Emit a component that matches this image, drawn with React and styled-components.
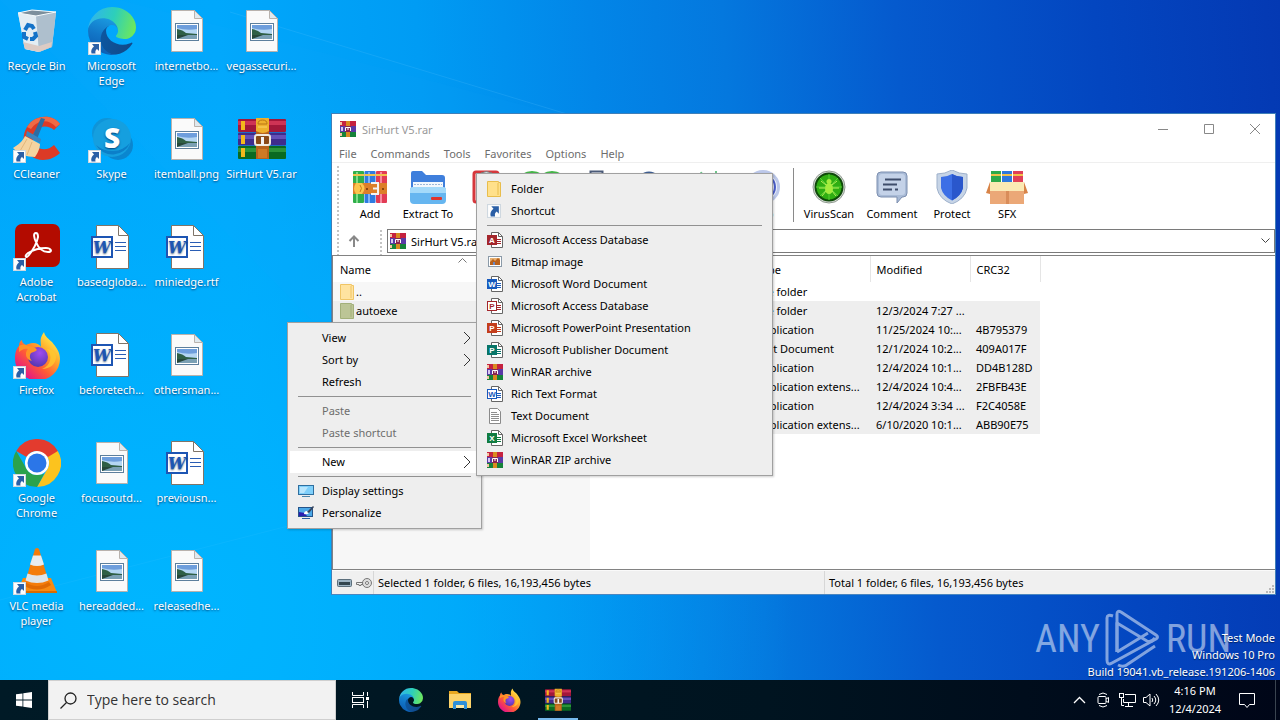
import React from "react";
import styled, { createGlobalStyle, css } from "styled-components";

const GlobalStyle = createGlobalStyle`
  * {
    box-sizing: border-box;
  }

  body {
    margin: 0;
    overflow: hidden;
    font-family: "Noto Sans", "Open Sans", sans-serif;
    font-size: 11px;
    line-height: 15px;
    color: #000;
  }

  button,
  input,
  select {
    font: inherit;
    color: inherit;
    border: none;
    background: none;
    padding: 0;
    margin: 0;
    border-radius: 0;
  }

  svg {
    display: block;
    flex-shrink: 0;
  }
`;

const Screen = styled.div`
  display: flex;
  flex-direction: column;
  height: 100vh;
  background: linear-gradient(
    86deg,
    #00a4fa 0%,
    #00a8fc 20%,
    #009cf4 35%,
    #0286e8 48%,
    #0478de 58%,
    #055ace 71%,
    #0346c0 86%,
    #0439b3 100%
  );
`;

const Desktop = styled.main`
  position: relative;
  flex: 1;
  min-height: 0;
  overflow: hidden;
  background: radial-gradient(
    ellipse 640px 560px at 12% 90%,
    rgba(0, 182, 255, 0.95),
    rgba(0, 180, 255, 0.55) 50%,
    rgba(0, 176, 255, 0) 100%
  );
`;

const Rays = styled.svg`
  position: absolute;
  inset: 0;
  width: 100%;
  height: 100%;
`;

/* desktop icons */

const IconGrid = styled.div`
  position: relative;
  display: grid;
  grid-auto-flow: column;
  grid-template-rows: repeat(6, 108px);
  grid-auto-columns: 75px;
  width: max-content;
  margin-left: -1px;
`;

const Shortcut = styled.button`
  display: flex;
  flex-direction: column;
  align-items: center;
  gap: 3px;
  padding-top: 7px;
  color: #fff;
  text-shadow: 0 1px 2px rgba(0, 40, 90, 0.8);
  grid-column: ${({ $col }) => $col};
`;

const IconBox = styled.span`
  position: relative;
  display: block;
  width: 48px;
  height: 48px;
`;

const LinkArrow = styled.span`
  position: absolute;
  left: 0;
  bottom: 0;
`;

const IconLabel = styled.span`
  white-space: pre;
`;

/* archive window */

const Window = styled.section`
  position: absolute;
  top: 113px;
  left: 331px;
  right: 4px;
  bottom: 85px;
  display: flex;
  flex-direction: column;
  background: #fff;
  border: 1px solid #3f7fb8;
  border-bottom-color: #4a86c0;
`;

const TitleBar = styled.header`
  display: flex;
  align-items: center;
  height: 30px;
  padding-left: 8px;
  gap: 6px;
  color: #999;
`;

const Title = styled.h1`
  flex: 1;
  margin: 0;
  font-size: 11px;
  font-weight: 400;
`;

const WindowButton = styled.button`
  display: flex;
  justify-content: center;
  align-items: center;
  width: 40px;
  height: 30px;
  color: #888;
`;

const MenuBar = styled.nav`
  display: flex;
  align-items: center;
  gap: 14px;
  height: 19px;
  padding-left: 7px;
  border-bottom: 1px solid #efefef;
  color: #6d6d6d;
`;

const Gripper = styled.span`
  align-self: stretch;
  width: 2px;
  margin: 3px 0 0;
  background: repeating-linear-gradient(#c4c4c4 0 2px, #fff 2px 4px);
`;

const Toolbar = styled.div`
  display: flex;
  height: 64px;
  padding-left: 5px;
`;

const ToolButton = styled.button`
  display: flex;
  flex-direction: column;
  align-items: center;
  gap: 2px;
  width: ${({ $width }) => $width}px;
  padding-top: 7px;
  white-space: nowrap;
`;

const ToolGap = styled.span`
  width: ${({ $width }) => $width}px;
`;

const ToolSeparator = styled.span`
  width: 1px;
  margin: 5px 4px 5px 14px;
  background: #8a8a8a;
`;

const AddressRow = styled.div`
  display: flex;
  align-items: center;
  height: 28px;
  padding-left: 5px;
`;

const UpButton = styled.button`
  display: flex;
  justify-content: center;
  width: 30px;
  margin-right: 11px;
`;

const AddressBox = styled.label`
  display: flex;
  flex: 1;
  align-items: center;
  gap: 5px;
  height: 24px;
  margin-left: 5px;
  padding: 0 4px 0 2px;
  border: 1px solid #7a7a7a;
`;

const AddressSelect = styled.select`
  flex: 1;
  appearance: none;
  outline: none;
`;

const ListPane = styled.div`
  flex: 1;
  min-height: 0;
  overflow: hidden;
  border: 1px solid #828282;
  border-width: 1px 0 1px 1px;
  background: linear-gradient(90deg, #f7f7f7 257px, #fff 257px);
`;

const FileTable = styled.table`
  table-layout: fixed;
  width: 707px;
  border-collapse: collapse;

  th,
  td {
    padding: 0 0 0 6px;
    font-weight: 400;
    text-align: left;
    white-space: nowrap;
    overflow: hidden;
  }

  th:first-child,
  td:first-child {
    padding-left: 7px;
  }

  th {
    height: 26px;
    background: #fff;
    border-right: 1px solid #e5e5e5;
  }

  td {
    height: 19px;
  }
`;

const FileRow = styled.tr`
  ${({ $selected }) =>
    $selected &&
    css`
      background: #eeeeee;
    `}
`;

const FileName = styled.span`
  display: flex;
  align-items: center;
  gap: 2px;
`;

const SortMark = styled.svg`
  float: right;
  margin: -4px 123px 0 0;
`;

const StatusBar = styled.footer`
  display: flex;
  align-items: stretch;
  height: 24px;
  background: #f0f0f0;
  border-top: 1px solid #fafafa;
`;

const StatusIcons = styled.div`
  display: flex;
  align-items: center;
  gap: 4px;
  width: 42px;
  padding-left: 5px;
  border-right: 1px solid #d7d7d7;
`;

const StatusPart = styled.div`
  display: flex;
  align-items: center;
  flex: 1;
  padding-left: 4px;

  & + & {
    border-left: 1px solid #d7d7d7;
  }
`;

const SizeGrip = styled.svg`
  align-self: flex-end;
  margin-left: -10px;
`;

/* context menus */

const Menu = styled.ul`
  position: absolute;
  left: ${({ $x }) => $x}px;
  top: ${({ $y }) => $y}px;
  width: ${({ $width }) => $width}px;
  margin: 0;
  padding: 4px 2px;
  list-style: none;
  background: #eeeeee;
  border: 1px solid #a0a0a0;
  box-shadow: 1px 1px 2px rgba(0, 0, 0, 0.2);
`;

const MenuItem = styled.button`
  display: flex;
  align-items: center;
  gap: 8px;
  width: 100%;
  height: 22px;
  padding: 0 8px;
  text-align: left;
  background: ${({ $open }) => ($open ? "#fff" : "transparent")};

  &:disabled {
    color: #6d6d6d;
  }
`;

const MenuIcon = styled.span`
  width: 16px;
`;

const MenuText = styled.span`
  flex: 1;
  padding-bottom: 2px;
`;

const MenuLine = styled.li`
  height: 1px;
  margin: 3px 8px;
  background: #919191;
`;

/* watermark */

const Watermark = styled.div`
  position: absolute;
  right: 49px;
  bottom: 10px;
  display: flex;
  align-items: center;
  gap: 4px;
  height: 62px;
  color: #fff;
  opacity: 0.5;
  font-family: "Liberation Sans Narrow", "Roboto Condensed", "Liberation Sans", sans-serif;
  font-size: 38px;
  line-height: 60px;
`;

const BuildInfo = styled.div`
  position: absolute;
  right: 5px;
  bottom: 0;
  color: #fff;
  line-height: 17px;
  text-align: right;
  text-shadow: 0 1px 1px rgba(0, 0, 0, 0.5);
`;

/* taskbar */

const Taskbar = styled.footer`
  display: flex;
  align-items: stretch;
  height: 40px;
  background: linear-gradient(90deg, #001a26, #001420 60%, #000618);
  color: #fff;
`;

const StartButton = styled.button`
  display: flex;
  justify-content: center;
  align-items: center;
  width: 48px;
`;

const SearchBox = styled.label`
  display: flex;
  align-items: center;
  gap: 10px;
  width: 288px;
  padding-left: 11px;
  background: #f2f2f2;
  border: 1px solid #cfcfcf;
  color: #222;
`;

const SearchInput = styled.input`
  flex: 1;
  min-width: 0;
  font-family: "Open Sans", "Noto Sans", sans-serif;
  font-size: 14px;
  line-height: 20px;
  outline: none;

  &::placeholder {
    color: #333;
    opacity: 1;
  }
`;

const TaskButton = styled.button`
  display: flex;
  justify-content: center;
  align-items: center;
  width: 49px;

  ${SearchBox} + & {
    margin-right: 1px;
  }
`;

const ActiveTask = styled(TaskButton)`
  width: 40px;
  margin-left: 5px;
  padding-top: 2px;
  border-bottom: 2px solid #76b9ed;
`;

const Tray = styled.div`
  display: flex;
  align-items: center;
  margin-left: auto;
`;

const TrayButton = styled.button`
  display: flex;
  justify-content: center;
  width: 24px;
`;

const Clock = styled.time`
  width: 64px;
  line-height: 18px;
  text-align: center;
`;

const ActionCenter = styled(TrayButton)`
  width: 40px;
`;

const PeekEdge = styled.span`
  align-self: stretch;
  width: 5px;
  margin-left: 8px;
  border-left: 1px solid #3a4450;
`;

/* drawings */

const ArrowBadge = ({ size = 13 }) => (
  <svg width={size} height={size} viewBox="0 0 13 13">
    <rect x="0.5" y="0.5" width="12" height="12" fill="#fdfdfd" stroke="#cfd8e0" />
    <path d="M4 2h7v7L9 7C7.500 8 7 9.500 7.500 11.500L3.500 11.500C2.500 8.500 4 6 6 4.500z" fill="#2b5fa6" />
  </svg>
);

const RecycleBin = () => (
  <svg width="48" height="48" viewBox="0 0 48 48">
    <path d="M5 6l14-3 24 2-4 35-13 5-14-3z" fill="#d5e3ee" opacity="0.92" />
    <path d="M5 6l18 3 3 36-14-3z" fill="#e3edf3" />
    <path d="M23 9l20-4-4 35-13 5z" fill="#aebfcd" />
    <path d="M10 35l16 4 13-4-1 5-12 5-14-3z" fill="#dccbc4" />
    <path d="M5 6l14-3 24 2-20 4z" fill="#7c8f9c" stroke="#f5fafc" />
    <g fill="none" stroke="#1473c8" strokeWidth="4">
      <path d="M12 23l3-5 4 1 2 3" />
      <path d="M22 25l1 4-3 3h-3" />
      <path d="M15 32l-4-2v-5" />
    </g>
  </svg>
);

const EdgeLogo = ({ size = 48 }) => (
  <svg width={size} height={size} viewBox="0 0 256 256">
    <defs>
      <linearGradient id="edgeDark" x1="0" x2="1" y1="0" y2="0.300">
        <stop offset="0" stopColor="#0c59a4" />
        <stop offset="1" stopColor="#114a8b" />
      </linearGradient>
      <linearGradient id="edgeBlue" x1="0.600" x2="0.300" y1="0" y2="1">
        <stop offset="0" stopColor="#1b9de2" />
        <stop offset="0.500" stopColor="#1277c8" />
        <stop offset="1" stopColor="#0b5ab0" />
      </linearGradient>
      <linearGradient id="edgeGreen" x1="0" x2="1" y1="0.400" y2="0.600">
        <stop offset="0" stopColor="#30b4ee" />
        <stop offset="0.500" stopColor="#2dcfba" />
        <stop offset="1" stopColor="#6fe85a" />
      </linearGradient>
    </defs>
    <path fill="url(#edgeDark)" d="M231 190.500c-3.400 1.800-6.900 3.400-10.500 4.700a101 101 0 0 1-35.900 6.400c-47.300 0-88.500-32.500-88.500-74.300a31.500 31.500 0 0 1 16.400-27.300c-42.800 1.800-53.800 46.400-53.800 72.500 0 74 68.100 81.400 82.800 81.400 7.900 0 19.800-2.300 27-4.600l1.300-.4a128.300 128.300 0 0 0 66.600-52.800 4 4 0 0 0-5.400-5.600Z" />
    <path fill="url(#edgeBlue)" d="M105.700 241.400a79.200 79.200 0 0 1-22.700-21.300 80.700 80.700 0 0 1 29.500-120c3.200-1.500 8.500-4.100 15.600-4a32.400 32.400 0 0 1 25.700 13 31.900 31.900 0 0 1 6.300 18.700c0-.2 24.500-79.600-80-79.600-43.900 0-80 41.600-80 78.200a130.200 130.200 0 0 0 12.100 56 128 128 0 0 0 156.400 67 75.500 75.500 0 0 1-62.800-8Z" />
    <path fill="url(#edgeGreen)" d="M152.300 148.900c-.9 1-3.400 2.500-3.400 5.600 0 2.600 1.700 5.200 4.800 7.300 14.300 10 41.400 8.600 41.500 8.600 10.700 0 21.100-2.900 30.300-8.300a61.400 61.400 0 0 0 30.400-52.900c.3-22.400-8-37.300-11.300-43.900C223.500 23.900 177.700 0 128 0A128 128 0 0 0 0 126.200c.5-36.500 36.800-66 80-66 3.500 0 23.500.3 42 10.100 16.300 8.600 24.900 19 30.800 29.200 6.200 10.700 7.300 24.100 7.300 29.500 0 5.300-2.700 13.300-7.800 19.900Z" />
  </svg>
);

const ImageFile = () => (
  <svg width="48" height="48" viewBox="0 0 48 48">
    <path d="M8.500 3.500h23l8 8v33h-31z" fill="#fafafa" stroke="#b9b2ad" />
    <path d="M31.500 3.500v8h8z" fill="#dfe9ef" stroke="#b9b2ad" />
    <rect x="12.500" y="16.500" width="23" height="17" fill="#fff" stroke="#5d7f9d" />
    <rect x="14" y="18" width="20" height="14" fill="#b4d6f3" />
    <path d="M14 18h20v4q-10 2-20-1z" fill="#6e9edc" />
    <path d="M14 22q6 1 9 4l11 1v2H14z" fill="#2f5f45" />
    <path d="M14 28h20v4H14z" fill="#7ba0b4" />
    <path d="M14 28h11l-11 4z" fill="#27483a" />
  </svg>
);

const WordFile = () => (
  <svg width="48" height="48" viewBox="0 0 48 48">
    <path d="M8.500 2.500h22l10 10v33h-32z" fill="#fff" stroke="#7f7468" />
    <path d="M30.500 2.500v10h10" fill="none" stroke="#7f7468" />
    <path d="M27 19.500h11M27 23.500h11M27 27.500h11" stroke="#2a5db4" />
    <rect x="4" y="14" width="20" height="20" fill="#fff" stroke="#1d55b3" strokeWidth="2" />
    <text x="14" y="30" textAnchor="middle" fontFamily="DejaVu Serif, serif" fontStyle="italic" fontWeight="700" fontSize="16" fill="#1d55b3">W</text>
  </svg>
);

const CCleaner = () => (
  <svg width="48" height="48" viewBox="0 0 48 48">
    <path d="M47 9C39-2 21 0 14 12c-6 10-4 22 4 29 9 7 22 4 29-3l-6-8c-5 5-13 6-18 1-5-6-4-12 1-17 5-4 13-3 17 1z" fill="#dc3a26" />
    <path d="M47 9C39-2 21 0 14 12l4 2C25 4 36 4 43 12z" fill="#ef6a45" />
    <path d="M28 3l4 1-8 20-5-2z" fill="#2c6da3" />
    <path d="M14 16l14 8-1 4-14-7z" fill="#3c85bd" />
    <path d="M12 21l15 8c0 5-3 10-5 13-8 0-17-3-22-9 5-3 10-7 12-12z" fill="#f4d3a0" />
    <path d="M14 24l-7 12M19 27l-5 13" stroke="#e3b67a" />
  </svg>
);

const Skype = () => (
  <svg width="48" height="48" viewBox="0 0 48 48">
    <circle cx="19" cy="18" r="15" fill="#0f94d8" />
    <circle cx="30" cy="30" r="15" fill="#0a86cf" />
    <circle cx="24" cy="23" r="19" fill="#159fdf" />
    <path d="M8 30a19 19 0 0 0 34-2 24 24 0 0 1-34 2z" fill="#0b7fc9" />
    <text x="24" y="33" textAnchor="middle" fontFamily="Open Sans, sans-serif" fontWeight="800" fontSize="28" fill="#fff">S</text>
  </svg>
);

const Acrobat = () => (
  <svg width="48" height="48" viewBox="0 0 48 48">
    <rect x="2" y="1" width="45" height="43" rx="7" fill="#b30b00" />
    <path d="M23 10c-3 0-2 5 0 9 2 5 6 10 12 10 5 0 3-4-2-4-6 0-13 2-18 5-4 3-2 6 1 2 4-5 8-13 9-18 0-3-1-4-2-4z" fill="none" stroke="#fff" strokeWidth="2" />
  </svg>
);

const Firefox = ({ size = 48 }) => (
  <svg width={size} height={size} viewBox="0 0 48 48">
    <defs>
      <linearGradient id="foxBody" x1="0.900" x2="0.200" y1="0.100" y2="0.900">
        <stop offset="0" stopColor="#fff44f" />
        <stop offset="0.350" stopColor="#ffa72a" />
        <stop offset="0.650" stopColor="#ff5a36" />
        <stop offset="1" stopColor="#e31587" />
      </linearGradient>
      <radialGradient id="foxCore" cx="0.600" cy="0.300" r="0.800">
        <stop offset="0" stopColor="#a14bf0" />
        <stop offset="1" stopColor="#4b35a8" />
      </radialGradient>
    </defs>
    <path d="M31 1c1 5 5 7 8 10 4 5 8 10 8 17a22 21 0 0 1-45 0c0-8 2-11 4-13 0-3 1-5 3-6 0 3 2 4 4 5 2-1 4-2 7-2 4 0 7 2 8 4 0-5-2-8 3-15z" fill="url(#foxBody)" />
    <circle cx="25" cy="26" r="10" fill="url(#foxCore)" />
    <path d="M6 15c4-2 7-1 9 0 4 0 7 1 9 4-2 2-5 2-6 3-2 3-1 6 1 8-6-1-8-8-4-12-4-1-6 1-9 3z" fill="#ff9426" />
    <path d="M34 18c6 6 4 17-5 20 8 0 14-5 14-12 0-5-4-8-9-8z" fill="#ffc830" opacity="0.800" />
  </svg>
);

const Chrome = () => (
  <svg width="48" height="48" viewBox="0 0 48 48">
    <path d="M3.200 12A24 24 0 0 1 44.800 12L24 12a12 12 0 0 0-10.400 6z" fill="#e33b2e" />
    <path d="M44.800 12A24 24 0 0 1 24 48L34.400 30A12 12 0 0 0 34.400 18L33 12z" fill="#fcc31e" />
    <path d="M24 48A24 24 0 0 1 3.200 12L13.600 30A12 12 0 0 0 24 36l7-1z" fill="#2ba24c" />
    <path d="M44.800 12H24v2l11 4z" fill="#e33b2e" />
    <circle cx="24" cy="24" r="12" fill="#fff" />
    <circle cx="24" cy="24" r="9.500" fill="#2b76e8" />
  </svg>
);

const Vlc = () => (
  <svg width="48" height="48" viewBox="0 0 48 48">
    <path d="M10 31h28l6 14.500H4z" fill="#f88a12" />
    <path d="M4 44h40v2H4z" fill="#d96b00" />
    <path d="M22 2q2-2 4 0l10 34q-12 7-24 0z" fill="#f47c0b" />
    <path d="M20 8.500h8l3 9q-7 3-14 0z" fill="#e8ecef" />
    <path d="M14.500 26.500q9.500 4 19 0l2 7q-11.500 5-23 0z" fill="#dfe4e8" />
    <path d="M12 35q12 8 24 0l2 3q-14 9-28 0z" fill="#e06a04" />
  </svg>
);

const Books = ({ size = 48 }) => (
  <svg width={size} height={size} viewBox="0 0 48 48">
    <rect x="0" y="4" width="48" height="13" rx="1" fill="#a3173a" />
    <rect x="0" y="6" width="48" height="4" fill="#cf3355" />
    <rect x="0" y="17.500" width="48" height="13" rx="1" fill="#3f2c8c" />
    <rect x="0" y="20" width="48" height="4" fill="#6450b8" />
    <rect x="0" y="31" width="48" height="13" rx="1" fill="#0a6a22" />
    <rect x="0" y="33" width="48" height="4" fill="#2b933a" />
    <path d="M3 6h4v9H3zM3 20h4v9H3zM3 33h4v9H3z" fill="#f4b81c" />
    <path d="M18 4h13v40H18z" fill="#b8631c" />
    <path d="M18 3h13v13q-6 4-13 0z" fill="#eeb02c" />
    <path d="M20 9q0-4 4.500-4t4.500 4z" fill="none" stroke="#b87514" />
    <path d="M20 12h9" stroke="#f9d566" />
    <rect x="17" y="20" width="15" height="10" rx="2" fill="#8a4a18" stroke="#f0eadd" strokeWidth="2" />
    <path d="M23 22h3v8h-3z" fill="#f3f3f3" />
    <path d="M20 34h9v9h-9z" fill="#cf7a25" />
  </svg>
);

const BooksSmall = () => (
  <svg width="16" height="16" viewBox="0 0 16 16">
    <path d="M0 0h16v5H0z" fill="#c5213f" />
    <path d="M0 5h16v6H0z" fill="#5a3aa6" />
    <path d="M0 11h16v5H0z" fill="#16833a" />
    <path d="M0 1h2v3H0zM0 12h2v3H0z" fill="#f5c5a0" />
    <path d="M1 6h2v4H1z" fill="#d8c8f0" />
    <path d="M6 0h4v5H6zM6 11h4v5H6z" fill="#d98a20" />
    <path d="M5 5h6v6H5z" fill="#8a2450" />
    <path d="M5.500 10V6.500h5V10M8 6.500V9" fill="none" stroke="#fff" />
  </svg>
);

const FolderSmall = ({ color = "#ffe08a", edge = "#e8bd4c" }) => (
  <svg width="14" height="16" viewBox="0 0 14 16">
    <path d="M0.500 0.500h11v1h2v14h-13z" fill={color} stroke={edge} />
    <path d="M11 2v12" stroke={edge} />
  </svg>
);

const OfficeSmall = ({ color, letter, hollow }) => (
  <svg width="16" height="16" viewBox="0 0 16 16">
    <path d="M4.500 0.500h7l4 4v11h-11z" fill="#fff" stroke="#666" />
    <path d="M11.500 0.500v4h4" fill="none" stroke="#666" />
    <path d="M10 7.500h4M10 9.500h4M10 11.500h4" stroke={color} />
    <rect x="0.500" y="3.500" width="9" height="9" fill={hollow ? "#fff" : color} stroke={color} />
    <text x="5" y="11" textAnchor="middle" fontFamily="Liberation Sans, sans-serif" fontWeight="700" fontSize="8" fill={hollow ? color : "#fff"}>
      {letter}
    </text>
  </svg>
);

const BitmapSmall = () => (
  <svg width="16" height="16" viewBox="0 0 16 16">
    <rect x="1.500" y="2.500" width="13" height="10" fill="#fff" stroke="#8b9aa8" />
    <path d="M3 4h10v7H3z" fill="#e8b070" />
    <path d="M3 8l3-3 2 2 3-3 2 2v5H3z" fill="#b8601c" />
    <path d="M6 8h2v3H6z" fill="#6b86c0" />
  </svg>
);

const TextSmall = () => (
  <svg width="16" height="16" viewBox="0 0 16 16">
    <path d="M2.500 0.500h8l3 3v12h-11z" fill="#fff" stroke="#8a8a8a" />
    <path d="M4 4.500h6M4 6.500h8M4 8.500h8M4 10.500h8M4 12.500h8" stroke="#8f8f8f" />
  </svg>
);

const DisplaySmall = () => (
  <svg width="16" height="16" viewBox="0 0 16 16">
    <rect x="0.500" y="2.500" width="15" height="9" fill="#7fd0fb" stroke="#2f6f9f" />
    <path d="M2 4h8L6 10H2z" fill="#b9e6fd" />
    <path d="M4 13.500h8" stroke="#4c87ad" />
  </svg>
);

const PersonalizeSmall = () => (
  <svg width="16" height="16" viewBox="0 0 16 16">
    <rect x="0.500" y="2.500" width="14" height="9" fill="#4aa8e8" stroke="#24548a" />
    <path d="M1 7l6 1 2 3H1z" fill="#2a1fb0" />
    <path d="M6 9q0-3 3-3l2 2q-2 2-5 1z" fill="#fff" />
    <path d="M9 7l6-6 1 1-5 6z" fill="#35435c" />
    <path d="M4 13.500h8" stroke="#2a5ea0" />
  </svg>
);

const Chevron = () => (
  <svg width="8" height="14" viewBox="0 0 8 14" fill="none" stroke="#333">
    <path d="M1 1l6 6-6 6" />
  </svg>
);

const AddIcon = () => (
  <svg width="34" height="34" viewBox="0 0 34 34">
    <rect x="0" y="1" width="11" height="32" rx="1" fill="#2fae4a" />
    <rect x="11.500" y="1" width="11" height="32" rx="1" fill="#2f7be0" />
    <rect x="23" y="1" width="11" height="32" rx="1" fill="#e23b55" />
    <path d="M3 2h2v31H3z" fill="#7fdc8a" />
    <path d="M15 2h2v31h-2z" fill="#7db4f7" />
    <path d="M27 2h2v31h-2z" fill="#f78ba0" />
    <path d="M0 4h11v2H0zM11.500 4h11v2h-11zM23 4h11v2H23z" fill="#f2c14a" />
    <path d="M0 13h34v11H0z" fill="#dc7f2a" />
    <path d="M3 13h6q5 5 0 11H3q-4-5 0-11z" fill="#fbc54c" />
    <path d="M7 15q3 3 0 7" fill="none" stroke="#c97c1a" />
    <path d="M18 13h7v11h-7M20 18.500h5" fill="none" stroke="#f4f4f4" strokeWidth="2" />
    <path d="M13 18h2v2h-2zM29 18h2v2h-2z" fill="#8a4510" />
  </svg>
);

const ExtractIcon = () => (
  <svg width="36" height="34" viewBox="0 0 36 34">
    <path d="M1 3q0-2 2-2h9l4 4h16q3 0 3 3v12H1z" fill="#3f7fdc" />
    <path d="M3 12h30v8H3z" fill="#f3f8fd" />
    <path d="M4 14.500h28" stroke="#9db8d8" strokeDasharray="2 1" />
    <path d="M0 20q0-3 3-3h30q3 0 3 3v10q0 4-4 4H4q-4 0-4-4z" fill="#66b6f0" />
    <path d="M0 20q0-3 3-3h30q3 0 3 3v3H0z" fill="#a4dafa" />
    <rect x="21" y="27" width="11" height="3" rx="1" fill="#e0352c" />
  </svg>
);

const TestIcon = () => (
  <svg width="34" height="34" viewBox="0 0 34 34">
    <rect x="4" y="2" width="24" height="30" rx="2" fill="#fff" stroke="#d6373c" strokeWidth="3" />
    <path d="M11 3q5-3 11 0v3H11z" fill="#d9dde2" stroke="#777" />
  </svg>
);

const ViewIcon = () => (
  <svg width="40" height="34" viewBox="0 0 40 34">
    <path d="M0 4q10-6 20 0 10-6 20 0v26H0z" fill="#45b649" />
    <path d="M3 6q9-4 17 0 8-4 17 0v20H3z" fill="#eaf7e8" />
  </svg>
);

const DeleteIcon = () => (
  <svg width="34" height="34" viewBox="0 0 34 34">
    <path d="M10.500 4V1.500h12V4" fill="none" stroke="#4a5a78" strokeWidth="2" />
    <path d="M5 5h24l-3 28H8z" fill="#a9b8d0" />
  </svg>
);

const FindIcon = () => (
  <svg width="34" height="34" viewBox="0 0 34 34">
    <circle cx="17" cy="14" r="11" fill="#d6e8fb" stroke="#3f5f92" strokeWidth="3" />
  </svg>
);

const WizardIcon = () => (
  <svg width="34" height="34" viewBox="0 0 34 34">
    <path d="M9 2l2 5M24 1v6M4 30L22 12" stroke="#6ec48a" strokeWidth="2" />
  </svg>
);

const InfoIcon = () => (
  <svg width="34" height="34" viewBox="0 0 34 34">
    <circle cx="17" cy="17" r="15.500" fill="#eef2fc" stroke="#bcc8ea" strokeWidth="3" />
    <circle cx="17" cy="17" r="12" fill="#e4eafa" stroke="#4c5fcc" strokeWidth="2" />
  </svg>
);

const VirusIcon = () => (
  <svg width="34" height="34" viewBox="0 0 34 34">
    <circle cx="17" cy="17" r="16" fill="#d9ddd9" stroke="#8f9a8f" />
    <circle cx="17" cy="17" r="13.500" fill="#2fae12" stroke="#0f4a0a" strokeWidth="2" />
    <path d="M17 4v26M4 17h26M8 8l18 18M26 8L8 26" stroke="#57cf35" />
    <g stroke="#b9f25a" fill="none">
      <path d="M14 15l-5-4M20 15l5-4M13 18H7M21 18h6M14 21l-4 5M20 21l4 5" />
    </g>
    <ellipse cx="17" cy="18.500" rx="4" ry="5.500" fill="#a4ec3e" />
    <circle cx="17" cy="11.500" r="2.500" fill="#a4ec3e" />
  </svg>
);

const CommentIcon = () => (
  <svg width="34" height="34" viewBox="0 0 34 34">
    <path d="M6 2h22q4 0 4 4v17q0 4-4 4h-1l-5 6v-6H6q-4 0-4-4V6q0-4 4-4z" fill="#a9bbd6" stroke="#7d8fb0" />
    <path d="M7 4h20q3 0 3 3v15q0 3-3 3H7q-3 0-3-3V7q0-3 3-3z" fill="#c4d2e8" />
    <path d="M10 9.500h16M8 14.500h14M8 19.500h9M20 19.500h3" stroke="#3e4d6b" strokeWidth="2" />
  </svg>
);

const ProtectIcon = () => (
  <svg width="34" height="34" viewBox="0 0 34 34">
    <path d="M17 0q7 4 15 4v14q-2 11-15 16Q4 29 2 18V4q8 0 15-4z" fill="#c6d4e6" stroke="#9db0cb" />
    <path d="M17 4q5 3 11 3v11q-2 8-11 12.500Q8 26 6 18V7q6 0 11-3z" fill="#3c6fe6" />
    <path d="M17 4q5 3 11 3v11q-2 8-11 12.500z" fill="#2a57cc" />
  </svg>
);

const SfxIcon = () => (
  <svg width="42" height="34" viewBox="0 0 42 34">
    <path d="M5 1h10v14H5z" fill="#2fa94a" />
    <path d="M16 1h10v14H16z" fill="#2f78dd" />
    <path d="M27 1h10v14H27z" fill="#e04058" />
    <path d="M5 4h10v2H5zM16 4h10v2H16zM27 4h10v2H27z" fill="#f2c14a" />
    <path d="M4 20h34v14H4z" fill="#eba877" />
    <path d="M4 12h34l1 9H3z" fill="#fbe9b4" />
    <path d="M4 12L0 23l4 1zM38 12l4 11-4 1z" fill="#d88448" />
    <path d="M20 21h3v13h-3z" fill="#d98d5a" />
  </svg>
);

const DiskIcon = () => (
  <svg width="15" height="8" viewBox="0 0 15 8">
    <rect x="0.500" y="0.500" width="14" height="7" rx="1" fill="#9db4c4" stroke="#5c6f7c" />
    <path d="M2 3h11v3H2z" fill="#33464f" />
  </svg>
);

const KeyIcon = () => (
  <svg width="16" height="12" viewBox="0 0 16 12" fill="none" stroke="#777">
    <circle cx="11" cy="6" r="4.500" fill="#ddd" />
    <circle cx="11" cy="6" r="1.500" fill="#fff" />
    <path d="M7 5.500H0.500v2H3v1h2v-1h2" />
  </svg>
);

const WindowsLogo = () => (
  <svg width="16" height="16" viewBox="0 0 16 16" fill="#fff">
    <path d="M0 2.300l6.500-.9v6.200H0zM7.300 1.300L16 0v7.600H7.300zM0 8.400h6.500v6.200L0 13.700zM7.300 8.400H16V16l-8.700-1.300z" />
  </svg>
);

const SearchGlyph = () => (
  <svg width="17" height="17" viewBox="0 0 17 17" fill="none" stroke="#222">
    <circle cx="10.500" cy="6.500" r="5.500" strokeWidth="1.300" />
    <path d="M6.500 10.500L0.500 16.500" strokeWidth="1.300" />
  </svg>
);

const TaskViewGlyph = () => (
  <svg width="17" height="16" viewBox="0 0 17 16" fill="none" stroke="#fff">
    <path d="M0.500 0v3.500h11V0M0.500 16v-3.500h11V16M15.500 0v4M15.500 9v7" />
    <rect x="0.500" y="5.500" width="11" height="5" />
    <rect x="14.500" y="5.500" width="2" height="2" fill="#fff" />
  </svg>
);

const Explorer = () => (
  <svg width="22" height="20" viewBox="0 0 22 20">
    <path d="M0 1h8l2 2h12v15H0z" fill="#e9a820" />
    <path d="M0 4h22v14H0z" fill="#fdd36a" />
    <path d="M4 19v-6q0-2 2-2h10q2 0 2 2v6h-3v-4H7v4z" fill="#2f8fd8" />
    <path d="M7 15h8v3H7z" fill="#fbe7a6" />
  </svg>
);

const PlayMark = () => (
  <svg width="58" height="60" viewBox="0 0 58 60" fill="none" stroke="#fff" strokeWidth="3" strokeLinejoin="round">
    <path d="M9 7q-6-2-6 2v42q0 6 5 3L52 30q3-2 0-4L17 3q-4-2-4 2v38" />
    <path d="M13 43V14l30 18q4 2 8-3M13 43l31-19M14 56q6 3 10-1l27-18" />
  </svg>
);

const desktopIcons = [
  { col: 1, label: "Recycle Bin", icon: <RecycleBin /> },
  { col: 1, label: "CCleaner", icon: <CCleaner />, link: true },
  { col: 1, label: "Adobe\nAcrobat", icon: <Acrobat />, link: true },
  { col: 1, label: "Firefox", icon: <Firefox />, link: true },
  { col: 1, label: "Google\nChrome", icon: <Chrome />, link: true },
  { col: 1, label: "VLC media\nplayer", icon: <Vlc />, link: true },
  { col: 2, label: "Microsoft\nEdge", icon: <EdgeLogo />, link: true },
  { col: 2, label: "Skype", icon: <Skype />, link: true },
  { col: 2, label: "basedgloba...", icon: <WordFile /> },
  { col: 2, label: "beforetech...", icon: <WordFile /> },
  { col: 2, label: "focusoutd...", icon: <ImageFile /> },
  { col: 2, label: "hereadded...", icon: <ImageFile /> },
  { col: 3, label: "internetbo...", icon: <ImageFile /> },
  { col: 3, label: "itemball.png", icon: <ImageFile /> },
  { col: 3, label: "miniedge.rtf", icon: <WordFile /> },
  { col: 3, label: "othersman...", icon: <ImageFile /> },
  { col: 3, label: "previousn...", icon: <WordFile /> },
  { col: 3, label: "releasedhe...", icon: <ImageFile /> },
  { col: 4, label: "vegassecuri...", icon: <ImageFile /> },
  { col: 4, label: "SirHurt V5.rar", icon: <Books /> },
];

const tools = [
  { label: "Add", width: 58, icon: <AddIcon /> },
  { label: "Extract To", width: 58, icon: <ExtractIcon /> },
  { label: "Test", width: 60, icon: <TestIcon /> },
  { label: "View", width: 50, icon: <ViewIcon /> },
  { label: "Delete", width: 60, icon: <DeleteIcon /> },
  { label: "Find", width: 44, icon: <FindIcon /> },
  { label: "Wizard", width: 76, icon: <WizardIcon /> },
  { label: "Info", width: 32, icon: <InfoIcon /> },
];

const extraTools = [
  { label: "VirusScan", width: 62, icon: <VirusIcon /> },
  { label: "Comment", width: 64, icon: <CommentIcon /> },
  { label: "Protect", width: 56, icon: <ProtectIcon /> },
  { label: "SFX", width: 54, icon: <SfxIcon /> },
];

const files = [
  { name: "..", type: "File folder", folder: true },
  { name: "autoexe", type: "File folder", modified: "12/3/2024 7:27 ...", folder: true, selected: true },
  { type: "Application", modified: "11/25/2024 10:...", crc: "4B795379", selected: true },
  { type: "Text Document", modified: "12/1/2024 10:2...", crc: "409A017F", selected: true },
  { type: "Application", modified: "12/4/2024 10:1...", crc: "DD4B128D", selected: true },
  { type: "Application extens...", modified: "12/4/2024 10:4...", crc: "2FBFB43E", selected: true },
  { type: "Application", modified: "12/4/2024 3:34 ...", crc: "F2C4058E", selected: true },
  { type: "Application extens...", modified: "6/10/2020 10:1...", crc: "ABB90E75", selected: true },
];

const contextItems = [
  { label: "View", arrow: true },
  { label: "Sort by", arrow: true },
  { label: "Refresh" },
  null,
  { label: "Paste", disabled: true },
  { label: "Paste shortcut", disabled: true },
  null,
  { label: "New", arrow: true, open: true },
  null,
  { label: "Display settings", icon: <DisplaySmall /> },
  { label: "Personalize", icon: <PersonalizeSmall /> },
];

const newItems = [
  { label: "Folder", icon: <FolderSmall /> },
  { label: "Shortcut", icon: <ArrowBadge size={14} /> },
  null,
  { label: "Microsoft Access Database", icon: <OfficeSmall color="#a4262c" letter="A" /> },
  { label: "Bitmap image", icon: <BitmapSmall /> },
  { label: "Microsoft Word Document", icon: <OfficeSmall color="#185abd" letter="W" /> },
  { label: "Microsoft Access Database", icon: <OfficeSmall color="#a4262c" letter="P" hollow /> },
  { label: "Microsoft PowerPoint Presentation", icon: <OfficeSmall color="#c43e1c" letter="P" /> },
  { label: "Microsoft Publisher Document", icon: <OfficeSmall color="#077568" letter="P" /> },
  { label: "WinRAR archive", icon: <BooksSmall /> },
  { label: "Rich Text Format", icon: <OfficeSmall color="#185abd" letter="W" hollow /> },
  { label: "Text Document", icon: <TextSmall /> },
  { label: "Microsoft Excel Worksheet", icon: <OfficeSmall color="#107c41" letter="X" /> },
  { label: "WinRAR ZIP archive", icon: <BooksSmall /> },
];

const PopupMenu = ({ items, x, y, width }) => (
  <Menu $x={x} $y={y} $width={width}>
    {items.map((item, index) =>
      item ? (
        <li key={index}>
          <MenuItem type="button" disabled={item.disabled} $open={item.open}>
            <MenuIcon>{item.icon}</MenuIcon>
            <MenuText>{item.label}</MenuText>
            {item.arrow && <Chevron />}
          </MenuItem>
        </li>
      ) : (
        <MenuLine key={index} role="separator" />
      )
    )}
  </Menu>
);

const ToolList = ({ items }) =>
  items.map((tool) => (
    <ToolButton key={tool.label} type="button" $width={tool.width}>
      {tool.icon}
      {tool.label}
    </ToolButton>
  ));

const ArchiveWindow = () => (
  <Window>
    <TitleBar>
      <BooksSmall />
      <Title>SirHurt V5.rar</Title>
      <WindowButton type="button" aria-label="Minimize">
        <svg width="10" height="10" viewBox="0 0 10 10" stroke="currentColor"><path d="M0 5.500h10" /></svg>
      </WindowButton>
      <WindowButton type="button" aria-label="Maximize">
        <svg width="10" height="10" viewBox="0 0 10 10" fill="none" stroke="currentColor"><path d="M0.500 0.500h9v9h-9z" /></svg>
      </WindowButton>
      <WindowButton type="button" aria-label="Close">
        <svg width="10" height="10" viewBox="0 0 10 10" stroke="currentColor"><path d="M0 0l10 10M10 0L0 10" /></svg>
      </WindowButton>
    </TitleBar>
    <MenuBar>
      {["File", "Commands", "Tools", "Favorites", "Options", "Help"].map((name) => (
        <button key={name} type="button">{name}</button>
      ))}
    </MenuBar>
    <Toolbar>
      <Gripper />
      <ToolGap $width={2} />
      <ToolList items={tools} />
      <ToolSeparator />
      <ToolList items={extraTools} />
    </Toolbar>
    <AddressRow>
      <Gripper />
      <UpButton type="button" aria-label="Up one level">
        <svg width="12" height="12" viewBox="0 0 12 12" fill="none" stroke="#888" strokeWidth="2"><path d="M6 12V2M1.500 6L6 1.500 10.500 6" /></svg>
      </UpButton>
      <Gripper />
      <AddressBox>
        <BooksSmall />
        <AddressSelect aria-label="Address" defaultValue="root">
          <option value="root">SirHurt V5.rar</option>
        </AddressSelect>
        <svg width="9" height="6" viewBox="0 0 9 6" fill="none" stroke="#444"><path d="M0.500 0.500l4 4 4-4" /></svg>
      </AddressBox>
    </AddressRow>
    <ListPane>
      <FileTable>
        <colgroup>
          <col width="257" />
          <col width="80" />
          <col width="80" />
          <col width="120" />
          <col width="100" />
          <col width="70" />
        </colgroup>
        <thead>
          <tr>
            <th>
              <SortMark width="9" height="5" viewBox="0 0 9 5" fill="none" stroke="#777"><path d="M0.500 4.500l4-4 4 4" /></SortMark>
              Name
            </th>
            <th>Size</th>
            <th>Packed</th>
            <th>Type</th>
            <th>Modified</th>
            <th>CRC32</th>
          </tr>
        </thead>
        <tbody>
          {files.map((file, index) => (
            <FileRow key={index} $selected={file.selected}>
              <td>
                <FileName>
                  {file.folder && (
                    <FolderSmall
                      color={file.selected ? "#bcc596" : "#ffe3a0"}
                      edge={file.selected ? "#a3b07a" : "#f0c565"}
                    />
                  )}
                  {file.name}
                </FileName>
              </td>
              <td />
              <td />
              <td>{file.type}</td>
              <td>{file.modified}</td>
              <td>{file.crc}</td>
            </FileRow>
          ))}
        </tbody>
      </FileTable>
    </ListPane>
    <StatusBar>
      <StatusIcons>
        <DiskIcon />
        <KeyIcon />
      </StatusIcons>
      <StatusPart>Selected 1 folder, 6 files, 16,193,456 bytes</StatusPart>
      <StatusPart>Total 1 folder, 6 files, 16,193,456 bytes</StatusPart>
      <SizeGrip width="10" height="10" viewBox="0 0 10 10" fill="#b8b8b8">
        <path d="M7 1h2v2H7zM7 4h2v2H7zM4 4h2v2H4zM7 7h2v2H7zM4 7h2v2H4zM1 7h2v2H1z" />
      </SizeGrip>
    </StatusBar>
  </Window>
);

const App = () => {
  return (
    <Screen>
      <GlobalStyle />
      <Desktop>
        <Rays viewBox="0 0 1280 680" preserveAspectRatio="none">
          <path d="M0 0h120L620 130 331 340z" fill="#1aa8ff" opacity="0.06" />
          <path d="M230 12L600 124" stroke="#5cc4ff" opacity="0.2" />
          <path d="M0 600L331 515" stroke="#5cd0ff" opacity="0.1" />
        </Rays>
        <IconGrid>
          {desktopIcons.map((item) => (
            <Shortcut key={item.label} type="button" $col={item.col}>
              <IconBox>
                {item.icon}
                {item.link && (
                  <LinkArrow>
                    <ArrowBadge />
                  </LinkArrow>
                )}
              </IconBox>
              <IconLabel>{item.label}</IconLabel>
            </Shortcut>
          ))}
        </IconGrid>
        <ArchiveWindow />
        <PopupMenu items={contextItems} x={287} y={322} width={195} />
        <PopupMenu items={newItems} x={476} y={173} width={297} />
        <Watermark>
          <span>ANY</span>
          <PlayMark />
          <span>RUN</span>
        </Watermark>
        <BuildInfo>
          <div>Test Mode</div>
          <div>Windows 10 Pro</div>
          <div>Build 19041.vb_release.191206-1406</div>
        </BuildInfo>
      </Desktop>
      <Taskbar>
        <StartButton type="button" aria-label="Start">
          <WindowsLogo />
        </StartButton>
        <SearchBox>
          <SearchGlyph />
          <SearchInput type="text" aria-label="Search" placeholder="Type here to search" />
        </SearchBox>
        <TaskButton type="button" aria-label="Task View"><TaskViewGlyph /></TaskButton>
        <TaskButton type="button" aria-label="Edge"><EdgeLogo size={24} /></TaskButton>
        <TaskButton type="button" aria-label="File Explorer"><Explorer /></TaskButton>
        <TaskButton type="button" aria-label="Firefox"><Firefox size={24} /></TaskButton>
        <ActiveTask type="button" aria-label="WinRAR"><Books size={26} /></ActiveTask>
        <Tray>
          <TrayButton type="button" aria-label="Show hidden icons">
            <svg width="13" height="8" viewBox="0 0 13 8" fill="none" stroke="#fff" strokeWidth="1.300"><path d="M1 7l5.500-5.500L12 7" /></svg>
          </TrayButton>
          <TrayButton type="button" aria-label="Meet now">
            <svg width="12" height="16" viewBox="0 0 12 16" fill="none" stroke="#fff">
              <path d="M2 2.500q4-3 8 0M2 13.500q4 3 8 0M9 7l2.500-1.500v5L9 9" />
              <rect x="1" y="4.500" width="8" height="7" rx="1" />
            </svg>
          </TrayButton>
          <TrayButton type="button" aria-label="Network">
            <svg width="17" height="14" viewBox="0 0 17 14" fill="none" stroke="#fff">
              <path d="M6 1.500h10.500v8H4.500V6M9.500 10v3M6 13.500h8" />
              <rect x="0.500" y="0.500" width="4" height="4" />
              <path d="M2.500 5v7.500H5" />
            </svg>
          </TrayButton>
          <TrayButton type="button" aria-label="Volume">
            <svg width="17" height="14" viewBox="0 0 17 14" fill="none" stroke="#fff">
              <path d="M0.500 4.500H3l4-3.500v12L3 9.500H0.500zM9 5q1.500 2 0 4M11 3q3.500 4 0 8M13 1q5.500 6 0 12" />
            </svg>
          </TrayButton>
          <Clock>
            4:16 PM
            <br />
            12/4/2024
          </Clock>
          <ActionCenter type="button" aria-label="Notifications">
            <svg width="16" height="17" viewBox="0 0 16 17" fill="none" stroke="#fff">
              <path d="M0.500 1.500h15v11h-5L8 15.500l-2.500-3h-5z" />
            </svg>
          </ActionCenter>
          <PeekEdge />
        </Tray>
      </Taskbar>
    </Screen>
  );
};

export default App;
